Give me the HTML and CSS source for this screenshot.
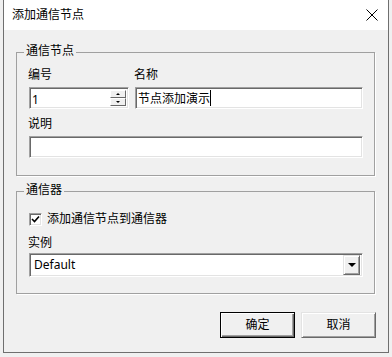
FILE: index.html
```html
<!DOCTYPE html>
<html lang="zh-CN">
<head>
    <meta charset="UTF-8">
    <title>添加通信节点</title>
    <link rel="stylesheet" href="styles.css">
</head>
<body>
    <div class="window">
        <div class="titlebar">
            <span class="title">添加通信节点</span>
            <svg class="close" width="12" height="12" viewBox="0 0 12 12">
                <path d="M0.5 0.5 L11.5 11.5 M11.5 0.5 L0.5 11.5" stroke="#000" stroke-width="1" fill="none"/>
            </svg>
        </div>
        <div class="content">
            <div class="group">
                <div class="group-title">通信节点</div>
                <div class="field-row">
                    <div class="field field-id">
                        <label>编号</label>
                        <div class="spin sunken">
                            <input type="text" value="1">
                            <div class="spin-btns">
                                <span class="spin-btn"><span class="arrow-up"></span></span>
                                <span class="spin-btn"><span class="arrow-down"></span></span>
                            </div>
                        </div>
                    </div>
                    <div class="field field-name">
                        <label>名称</label>
                        <div class="name-box">
                            <input type="text" class="sunken" value="节点添加演示">
                            <span class="caret"></span>
                        </div>
                    </div>
                </div>
                <div class="field field-desc">
                    <label>说明</label>
                    <input type="text" class="sunken">
                </div>
            </div>
            <div class="group group-comm">
                <div class="group-title">通信器</div>
                <label class="check">
                    <span class="checkbox sunken">
                        <svg width="9" height="9" viewBox="0 0 9 9">
                            <path d="M1 4 L3.5 6.5 L8 1.5" stroke="#000" stroke-width="1.6" fill="none"/>
                        </svg>
                    </span>
                    添加通信节点到通信器
                </label>
                <div class="field field-inst">
                    <label>实例</label>
                    <div class="combo sunken">
                        <span class="combo-value">Default</span>
                        <span class="combo-btn"><span class="arrow-big"></span></span>
                    </div>
                </div>
            </div>
            <div class="buttons">
                <button class="btn btn-default">确定</button>
                <button class="btn">取消</button>
            </div>
        </div>
    </div>
</body>
</html>
```

FILE: styles.css
```css
body {
    margin: 0;
    background-color: #f0f0f0;
    font-family: "Noto Sans", "Noto Sans CJK SC", sans-serif;
    font-size: 12px;
    line-height: 16px;
    color: #000;
}
.window {
    margin-left: 3px;
    width: 384px;
    border: 1px solid #6f6f6f;
    border-top: none;
    background-color: #f0f0f0;
}
.titlebar {
    height: 30px;
    background-color: #fff;
    display: flex;
    align-items: center;
    justify-content: space-between;
    padding-left: 8px;
    padding-right: 10px;
}
.title {
    line-height: 30px;
}
.content {
    padding: 22px 12px 14px 12px;
}
.sunken {
    border: 1px solid;
    border-color: #a0a0a0 #fff #fff #a0a0a0;
    box-shadow: inset 1px 1px #696969, inset -1px -1px #e3e3e3;
    background-color: #fff;
    box-sizing: border-box;
}
.group {
    width: 359px;
    box-sizing: border-box;
    border: 1px solid #a0a0a0;
    box-shadow: 1px 1px 0 #fff;
    padding: 0 11px 17px 12px;
}
.group-comm {
    margin-top: 15px;
    padding-bottom: 16px;
}
.group-title {
    width: fit-content;
    margin: -10px 0 0 -5px;
    padding: 0 2px;
    background-color: #f0f0f0;
}
.field-row {
    display: flex;
    gap: 6px;
    margin-top: 8px;
}
.field label {
    display: block;
    margin-left: -1px;
    margin-bottom: 4px;
}
.field input {
    display: block;
    width: 100%;
    height: 22px;
    padding: 0 2px;
    font: inherit;
    outline: none;
}
.field-id {
    width: 100px;
}
.field-name {
    width: 228px;
}
.name-box {
    position: relative;
}
.caret {
    position: absolute;
    left: 75px;
    top: 3px;
    width: 1px;
    height: 16px;
    background-color: #000;
}
.field-desc {
    margin-top: 7px;
}
.spin {
    display: flex;
    height: 22px;
    padding: 2px;
}
.spin input {
    flex: 1;
    min-width: 0;
    height: 18px;
    border: none;
    padding: 0;
    background: transparent;
}
.spin-btns {
    display: flex;
    flex-direction: column;
    width: 16px;
}
.spin-btn {
    flex: 1;
    display: flex;
    align-items: center;
    justify-content: center;
    box-sizing: border-box;
    border: 1px solid;
    border-color: #fff #696969 #696969 #fff;
    background-color: #f0f0f0;
}
.arrow-up {
    border-left: 2px solid transparent;
    border-right: 2px solid transparent;
    border-bottom: 2px solid #000;
}
.arrow-down {
    border-left: 2px solid transparent;
    border-right: 2px solid transparent;
    border-top: 2px solid #000;
}
.check {
    display: flex;
    align-items: center;
    gap: 5px;
    margin-top: 13px;
}
.checkbox {
    width: 13px;
    height: 13px;
    display: flex;
    align-items: center;
    justify-content: center;
}
.field-inst {
    margin-top: 8px;
}
.field-inst label {
    margin-bottom: 2px;
}
.combo {
    display: flex;
    align-items: center;
    height: 24px;
    padding: 2px;
}
.combo-value {
    flex: 1;
    padding-left: 2px;
}
.combo-btn {
    width: 17px;
    height: 20px;
    box-sizing: border-box;
    display: flex;
    align-items: center;
    justify-content: center;
    border: 1px solid;
    border-color: #e3e3e3 #696969 #696969 #e3e3e3;
    box-shadow: inset 1px 1px #fff, inset -1px -1px #a0a0a0;
    background-color: #f0f0f0;
}
.arrow-big {
    border-left: 4px solid transparent;
    border-right: 4px solid transparent;
    border-top: 4px solid #000;
}
.buttons {
    display: flex;
    justify-content: flex-end;
    gap: 6px;
    margin-top: 18px;
}
.btn {
    width: 75px;
    height: 26px;
    padding: 0;
    font: inherit;
    color: #000;
    background-color: #f0f0f0;
    border: 1px solid;
    border-color: #e3e3e3 #696969 #696969 #e3e3e3;
    box-shadow: inset 1px 1px #fff, inset -1px -1px #a0a0a0;
}
.btn-default {
    border-color: #000;
    box-shadow: inset 1px 1px #fff, inset -1px -1px #696969, inset -2px -2px #a0a0a0;
}
```
